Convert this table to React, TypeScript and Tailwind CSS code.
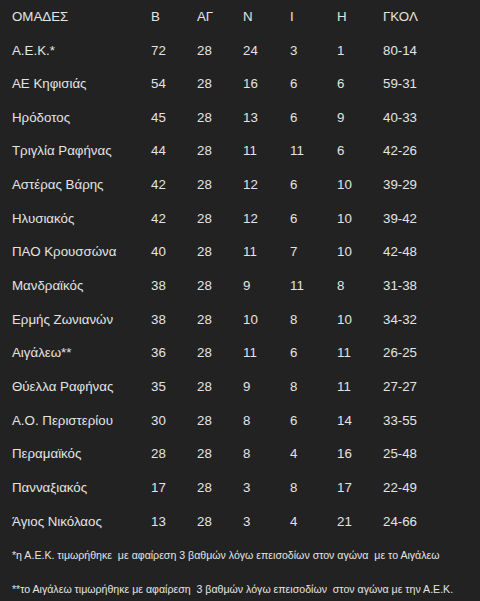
const rows: [string, string, string, string, string, string, string][] = [
  ["Α.Ε.Κ.*", "72", "28", "24", "3", "1", "80-14"],
  ["ΑΕ Κηφισιάς", "54", "28", "16", "6", "6", "59-31"],
  ["Ηρόδοτος", "45", "28", "13", "6", "9", "40-33"],
  ["Τριγλία Ραφήνας", "44", "28", "11", "11", "6", "42-26"],
  ["Αστέρας Βάρης", "42", "28", "12", "6", "10", "39-29"],
  ["Ηλυσιακός", "42", "28", "12", "6", "10", "39-42"],
  ["ΠΑΟ Κρουσσώνα", "40", "28", "11", "7", "10", "42-48"],
  ["Μανδραϊκός", "38", "28", "9", "11", "8", "31-38"],
  ["Ερμής Ζωνιανών", "38", "28", "10", "8", "10", "34-32"],
  ["Αιγάλεω**", "36", "28", "11", "6", "11", "26-25"],
  ["Θύελλα Ραφήνας", "35", "28", "9", "8", "11", "27-27"],
  ["Α.Ο. Περιστερίου", "30", "28", "8", "6", "14", "33-55"],
  ["Περαμαϊκός", "28", "28", "8", "4", "16", "25-48"],
  ["Πανναξιακός", "17", "28", "3", "8", "17", "22-49"],
  ["Άγιος Νικόλαος", "13", "28", "3", "4", "21", "24-66"],
];

const Row = ({ cells }: { cells: string[] }) => (
  <div className="flex h-[33.67px] items-center">
    <div className="w-[139px]">{cells[0]}</div>
    <div className="w-[46px]">{cells[1]}</div>
    <div className="w-[46px]">{cells[2]}</div>
    <div className="w-[47px]">{cells[3]}</div>
    <div className="w-[47px]">{cells[4]}</div>
    <div className="w-[46px]">{cells[5]}</div>
    <div>{cells[6]}</div>
  </div>
);

const App = () => {
  return (
    <div
      className="h-[601px] w-[480px] overflow-hidden bg-[#222222] pl-3 text-[13.3px] text-[#e4e4e4]"
      style={{ fontFamily: '"Liberation Sans", Arial, sans-serif' }}
    >
      <Row cells={["ΟΜΑΔΕΣ", "Β", "ΑΓ", "Ν", "Ι", "Η", "ΓΚΟΛ"]} />
      {rows.map((r) => (
        <Row key={r[0]} cells={r} />
      ))}
      <div className="flex h-[34px] items-center whitespace-pre text-[10.6px]">
        *η Α.Ε.Κ. τιμωρήθηκε  με αφαίρεση 3 βαθμών λόγω επεισοδίων στον αγώνα  με το Αιγάλεω
      </div>
      <div className="flex h-[34px] items-center whitespace-pre text-[10.6px]">
        **το Αιγάλεω τιμωρήθηκε με αφαίρεση  3 βαθμών λόγω επεισοδίων  στον αγώνα με την Α.Ε.Κ.
      </div>
    </div>
  );
};

export default App;
